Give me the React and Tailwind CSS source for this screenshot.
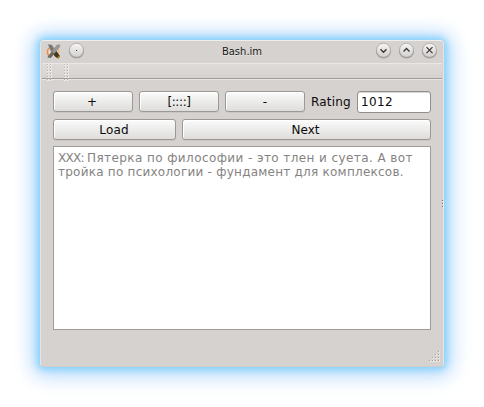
const DEJAVU = "font-['DejaVu_Sans',sans-serif]";

function PushButton({ children, className }) {
  return (
    <button
      className={`flex h-[21px] items-center justify-center rounded-[3px] border border-[#9c9896] bg-linear-to-b from-[#fbfbfb] to-[#dedddb] leading-none text-[#0c0b0b] shadow-[inset_1px_1px_0_#ffffff,0_1px_0_#cbc7c5] ${className}`}
    >
      {children}
    </button>
  );
}

function TitleButton({ label, children }) {
  return (
    <button aria-label={label} className="block h-[17px] w-[17px]">
      <svg viewBox="0 0 17 17" width="17" height="17" className="block overflow-visible">
        <defs>
          <linearGradient id="knob" x1="0" y1="0" x2="0" y2="1">
            <stop offset="0" stopColor="#f6f5f5" />
            <stop offset="1" stopColor="#d3d0ce" />
          </linearGradient>
        </defs>
        <circle cx="8.5" cy="9" r="7.600" fill="#8f8b89" opacity=".75" />
        <circle cx="8.5" cy="8.200" r="7" fill="url(#knob)" stroke="#a5a19f" strokeWidth=".7" />
        {children}
      </svg>
    </button>
  );
}

function XIcon() {
  return (
    <svg viewBox="0 0 16 16" width="15" height="15" className="mt-[-2px] block shrink-0">
      <path d="M4.500 3.500C1 5 .5 9.500 3 12.500" fill="none" stroke="#f58a38" strokeWidth="1.500" />
      <path d="M12 5c2 1 2 4 .5 6" fill="none" stroke="#fbb96a" strokeWidth="1.400" />
      <path d="M3.500 7l-.5 3.500 3 .5z" fill="#ffdf9e" />
      <path d="M2 .5l4 .3L15 13l-2 2.500-3-2L5 7z" fill="#7b7875" />
      <path d="M8.500 7.500l2-.5 4.500 6-2 2.500-3-2L7 10z" fill="#48371a" />
      <path d="M12 14.300l2-2.300 1 1.200-1.800 2.300z" fill="#b5861f" />
      <path d="M15 .5l-3.500.2L1.500 14 5 15 15 3z" fill="#999795" />
      <path d="M6.300 7.800L1.500 14l3.500 1 4-5z" fill="#6b6866" />
    </svg>
  );
}

function Handle() {
  return (
    <svg width="6" height="17" className="block shrink-0" shapeRendering="crispEdges">
      {[0, 3].map((x) =>
        [0, 3, 6, 9, 12, 15].map((y) => (
          <g key={`${x}-${y}`}>
            <rect x={x} y={y} width="2" height="2" fill="#eeebea" />
            <rect x={x} y={y} width="1" height="1" fill="#b5b1ae" />
          </g>
        )),
      )}
    </svg>
  );
}

const GRIP = [[9, 0], [6, 3], [9, 3], [3, 6], [6, 6], [9, 6], [0, 9], [3, 9], [6, 9], [9, 9]];

export default function App() {
  return (
    <div className={`h-[407px] w-[484px] overflow-hidden bg-white pt-[40px] pl-[40px] ${DEJAVU}`}>
      <div className="relative flex h-[327px] w-[404px] flex-col rounded-[4px] border border-[#e6e3e1] border-t-[#f0eeed] border-b-[#d0cccc] bg-[#d6d2cf] shadow-[0_0_7px_2px_#80d0fb,0_1px_17px_5px_#b0dafc,0_2px_24px_9px_#e4eefd]">
        <div className="flex h-[22px] shrink-0 items-center px-[5px]">
          <XIcon />
          <div className="mt-[-3px] ml-[7px]">
            <TitleButton label="Window menu">
              <rect x="8" y="8" width="1" height="1" fill="#333" />
            </TitleButton>
          </div>
          <div className="flex-1 pl-[24px] text-center text-[10px] leading-none text-[#1a1817] [text-shadow:0_1px_0_#e9e6e4]">
            Bash.im
          </div>
          <div className="mt-[-3px] flex gap-[6px]">
            <TitleButton label="Minimize">
              <path d="M5.500 7.200l3 3 3-3" fill="none" stroke="#3a3837" strokeWidth="1.400" />
            </TitleButton>
            <TitleButton label="Maximize">
              <path d="M5.500 9.500l3-3 3 3" fill="none" stroke="#3a3837" strokeWidth="1.400" />
            </TitleButton>
            <TitleButton label="Close">
              <path d="M5.500 5.200l6 6M11.500 5.200l-6 6" fill="none" stroke="#3a3837" strokeWidth="1.200" />
            </TitleButton>
          </div>
        </div>

        <div className="mx-px flex h-[17px] shrink-0 gap-[11px] border-t border-[#eae7e5] bg-linear-to-b from-[#dedad8] to-[#d5d1ce] pl-[5px] shadow-[inset_0_-1px_0_#e9e6e4,inset_0_-2px_0_#a09c99]">
          <Handle />
          <Handle />
        </div>

        <div className="flex flex-col px-[12px] pt-[11px]">
          <div className="flex h-[22px] items-start">
            <PushButton className="w-[80px] pt-px pr-[2px] text-[12px]">+</PushButton>
            <PushButton className="ml-[6px] w-[80px] pt-px text-[12px] tracking-[-0.4px]">[::::]</PushButton>
            <PushButton className="ml-[6px] w-[80px] pt-px text-[12px]">-</PushButton>
            <label className="ml-[6px] w-[46px] pt-px text-[12px] leading-[21px] tracking-[0.2px] whitespace-nowrap text-[#0c0b0b]">Rating</label>
            <input
              defaultValue="1012"
              className="h-[22px] w-[74px] rounded-[3px] border border-[#928e8b] bg-white pb-px pl-[3px] text-[12px] tracking-[0.4px] text-[#0c0b0b] shadow-[inset_0_1px_0_#d8d5d3] outline-none"
            />
          </div>
          <div className="mt-[6px] flex gap-[6px]">
            <PushButton className="w-[123px] pr-px text-[12px] tracking-[0.2px]">Load</PushButton>
            <PushButton className="w-[249px] pr-[2px] text-[12px]">Next</PushButton>
          </div>
          <div className="mt-[6px] h-[184px] w-[378px] border border-[#a09c99] bg-white pt-[4px] pl-[4px] text-[12px] leading-[14px] whitespace-nowrap text-[#858382]">
            <div>
              <span className="tracking-[-0.7px]">XXX: </span>
              <span className="tracking-[0.41px]">Пятерка по философии - это тлен и суета. А вот</span>
            </div>
            <div className="tracking-[0.24px]">тройка по психологии - фундамент для комплексов.</div>
          </div>
        </div>

        <svg width="11" height="11" className="absolute right-[3px] bottom-[4px]" shapeRendering="crispEdges">
          {GRIP.map(([x, y]) => (
            <g key={`${x}-${y}`}>
              <rect x={x} y={y} width="2" height="2" fill="#e9e6e5" />
              <rect x={x} y={y} width="1" height="1" fill="#a09c9a" />
            </g>
          ))}
        </svg>
        <svg width="2" height="8" className="absolute top-[159px] right-[-1px]" shapeRendering="crispEdges">
          {[0, 3, 6].map((y) => (
            <g key={y}>
              <rect x="0" y={y} width="1" height="1" fill="#77736f" />
              <rect x="1" y={y + 1} width="1" height="1" fill="#ffffff" />
            </g>
          ))}
        </svg>
      </div>
    </div>
  );
}
